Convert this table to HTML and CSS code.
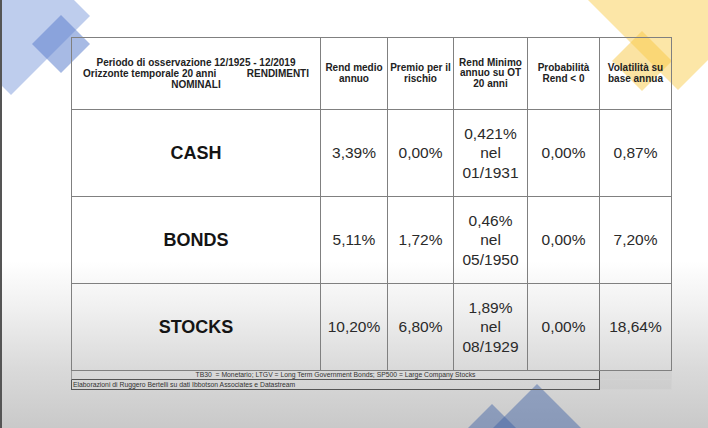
FILE: index.html
```html
<!DOCTYPE html>
<html lang="it">
<head>
<meta charset="utf-8">
<title>Rendimenti nominali 1925-2019</title>
<link rel="stylesheet" href="styles.css">
</head>
<body>
<div class="slide">
  <svg class="deco" width="708" height="428" viewBox="0 0 708 428" aria-hidden="true">
    <polygon class="blue-big" points="11,-63 90,16 11,95 -68,16"/>
    <polygon class="blue-small" points="61,15 90,44 61,73 32,44"/>
    <polygon class="yellow-big" points="678,-122 784,-16 678,90 572,-16"/>
    <polygon class="yellow-small" points="642,31 672,61 642,91 612,61"/>
    <polygon class="mount-big" points="537,384 601,448 473,448"/>
    <polygon class="mount-small" points="492,404 522,434 462,434"/>
  </svg>
  <main class="content">
    <div class="grid">
      <div class="cell head head-main">
        <span>Periodo di osservazione 12/1925 - 12/2019</span>
        <span class="split"><span>Orizzonte temporale 20 anni</span><span>RENDIMENTI</span></span>
        <span>NOMINALI</span>
      </div>
      <div class="cell head">Rend medio<br>annuo</div>
      <div class="cell head">Premio per il<br>rischio</div>
      <div class="cell head">Rend Minimo<br>annuo su OT<br>20 anni</div>
      <div class="cell head">Probabilità<br>Rend &lt; 0</div>
      <div class="cell head">Volatilità su<br>base annua</div>

      <div class="cell label">CASH</div>
      <div class="cell num">3,39%</div>
      <div class="cell num">0,00%</div>
      <div class="cell num multi">0,421%<br>nel<br>01/1931</div>
      <div class="cell num">0,00%</div>
      <div class="cell num">0,87%</div>

      <div class="cell label">BONDS</div>
      <div class="cell num">5,11%</div>
      <div class="cell num">1,72%</div>
      <div class="cell num multi">0,46%<br>nel<br>05/1950</div>
      <div class="cell num">0,00%</div>
      <div class="cell num">7,20%</div>

      <div class="cell label">STOCKS</div>
      <div class="cell num">10,20%</div>
      <div class="cell num">6,80%</div>
      <div class="cell num multi">1,89%<br>nel<br>08/1929</div>
      <div class="cell num">0,00%</div>
      <div class="cell num">18,64%</div>
    </div>
    <div class="notes">
      <div class="note-main legend">TB30&nbsp; = Monetario; LTGV = Long Term Government Bonds; SP500 = Large Company Stocks</div>
      <div class="note-ext legend-ext"></div>
      <div class="note-main source">Elaborazioni di Ruggero Bertelli su dati Ibbotson Associates e Datastream</div>
      <div class="note-ext source-ext"></div>
    </div>
  </main>
</div>
</body>
</html>
```

FILE: styles.css
```css
html, body {
  margin: 0;
  padding: 0;
}

body {
  width: 708px;
  height: 428px;
  overflow: hidden;
  font-family: "Liberation Sans", Arial, sans-serif;
}

.slide {
  position: relative;
  box-sizing: border-box;
  width: 708px;
  height: 428px;
  overflow: hidden;
  border-left: 2px solid #555;
  background: linear-gradient(to bottom, #ffffff 0%, #ffffff 61%, #f0f0f0 72%, #dadada 86%, #c9c9c9 100%);
}

.deco {
  position: absolute;
  left: -2px;
  top: 0;
  z-index: 0;
}

.blue-big { fill: rgba(110, 145, 215, 0.45); }
.blue-small { fill: rgba(95, 130, 205, 0.55); }
.yellow-big { fill: rgba(250, 205, 80, 0.5); }
.yellow-small { fill: rgba(248, 200, 70, 0.5); }
.mount-big { fill: rgba(60, 95, 165, 0.45); }
.mount-small { fill: rgba(60, 95, 165, 0.45); }

.content {
  position: relative;
  z-index: 1;
  display: flex;
  flex-direction: column;
  padding: 37px 0 0 69px;
}

.grid {
  display: grid;
  grid-template-columns: 249px 67px 66px 74px 72px 72px;
  grid-template-rows: 72px 87px 87px 87px;
  width: max-content;
  border-left: 1px solid #808080;
  border-top: 1px solid #808080;
}

.cell {
  display: flex;
  flex-direction: column;
  align-items: center;
  justify-content: center;
  text-align: center;
  border-right: 1px solid #808080;
  border-bottom: 1px solid #808080;
  color: #2a2a2a;
}

.head {
  font-size: 10px;
  font-weight: bold;
  line-height: 10.5px;
  color: #222;
}

.head-main {
  line-height: 11px;
}

.split {
  display: flex;
  justify-content: space-between;
  width: 226px;
}

.label {
  font-size: 18px;
  font-weight: bold;
  color: #141414;
}

.num {
  font-size: 15.5px;
  line-height: 19.5px;
}

.notes {
  display: grid;
  grid-template-columns: 529px 72px;
  grid-template-rows: 9px 10px;
}

.note-main {
  box-sizing: border-box;
  font-size: 6.8px;
  color: #333;
  white-space: nowrap;
  overflow: hidden;
}

.legend {
  text-align: center;
  line-height: 8px;
  border-left: 1px solid #999;
  border-right: 1px solid #555;
  border-bottom: 1px solid #555;
}

.source {
  text-align: left;
  line-height: 9px;
  padding-left: 1px;
  border-left: 1px solid #555;
  border-right: 1px solid #555;
  border-bottom: 1px solid #555;
}

.note-ext {
  box-sizing: border-box;
  background: rgba(0, 0, 0, 0.03);
  border-right: 1px solid #d2d2d2;
  border-bottom: 1px solid #d2d2d2;
}
```
